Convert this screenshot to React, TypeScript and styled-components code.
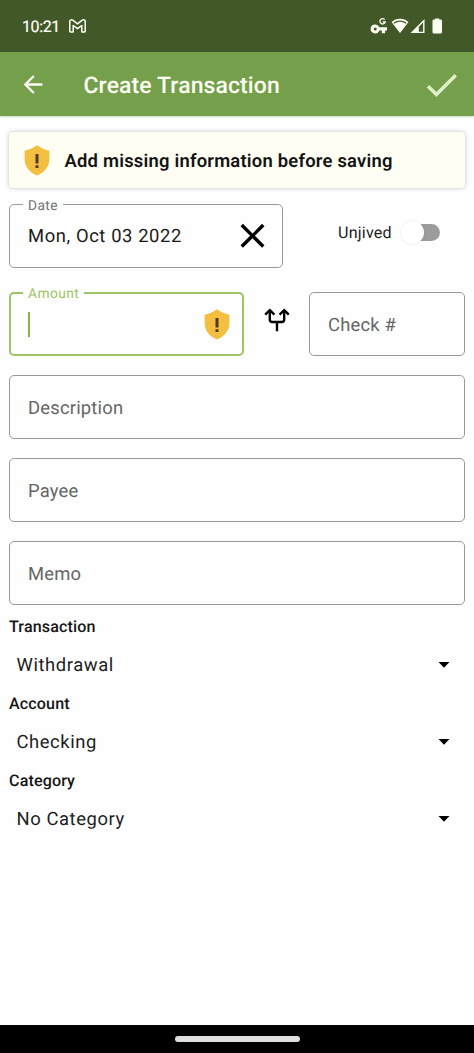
import React from "react";
import styled, { createGlobalStyle } from "styled-components";

const GlobalStyle = createGlobalStyle`
  * { box-sizing: border-box; }
  body { margin: 0; background: #fff; font-family: Roboto, "Liberation Sans", sans-serif; color: #1d1d1d; text-rendering: geometricPrecision; }
  svg { display: block; flex: none; }
`;

const Screen = styled.div`
  display: flex;
  flex-direction: column;
  width: 474px;
  height: 1053px;
  overflow: hidden;
  background: #fefefe;
`;

const StatusBar = styled.div`
  display: flex;
  align-items: center;
  justify-content: space-between;
  flex: none;
  height: 52px;
  padding: 0 32px 0 22px;
  background: #435829;
  color: #fbfff2;
`;

const StatusGroup = styled.div`
  display: flex;
  align-items: center;
`;

const Clock = styled.span`
  width: 47px;
  padding-top: 1px;
  font-size: 16px;
  font-weight: 400;
  line-height: 20px;
  letter-spacing: -0.4px;
  white-space: nowrap;
  -webkit-text-stroke: 0.2px currentColor;
`;

const AppBar = styled.header`
  display: flex;
  align-items: center;
  flex: none;
  height: 64px;
  padding: 2px 12px 0 19px;
  background: #759f4a;
  box-shadow: 0 1px 2px rgba(60, 90, 30, 0.25);
`;

const Title = styled.h1`
  flex: 1;
  margin: 0 0 0 36.5px;
  padding-top: 2px;
  font-size: 23px;
  font-weight: 500;
  line-height: 30px;
  letter-spacing: 0.1px;
  color: #fbfff4;
`;

const Form = styled.main`
  display: flex;
  flex-direction: column;
  flex: 1;
  padding: 16px 9px 0;
`;

const Banner = styled.div`
  display: flex;
  align-items: center;
  gap: 14.5px;
  height: 56px;
  padding: 0 15px 0 15px;
  border-radius: 4px;
  background: #fffef3;
  box-shadow: 0 0 4px rgba(0, 0, 0, 0.25);
`;

const BannerText = styled.strong`
  padding-top: 4px;
  font-size: 18.4px;
  font-weight: 600;
  line-height: 24px;
  letter-spacing: 0.22px;
  white-space: nowrap;
  color: #141414;
`;

const Row = styled.div<{ $top: number }>`
  display: flex;
  width: 456px;
  margin-top: ${(p) => p.$top}px;
`;

const Field = styled.div<{ $width: number; $active?: boolean }>`
  position: relative;
  display: flex;
  align-items: center;
  justify-content: space-between;
  flex: none;
  width: ${(p) => p.$width}px;
  height: 64px;
  padding: 0 ${(p) => (p.$active ? 12 : 9)}px 0 ${(p) => (p.$active ? 16 : 18)}px;
  border: ${(p) => (p.$active ? "2.5px solid #9dc565" : "1.3px solid #999")};
  border-radius: 5px;
  color: ${(p) => (p.$active ? "#9dc565" : "#747474")};
`;

const FloatingLabel = styled.span<{ $top: number; $left: number }>`
  position: absolute;
  top: ${(p) => p.$top}px;
  left: ${(p) => p.$left}px;
  padding: 0 5px;
  background: #fefefe;
  font-size: 13.8px;
  line-height: 16px;
  letter-spacing: 0.4px;
`;

const FieldText = styled.span<{ $dark?: boolean }>`
  padding-top: ${(p) => (p.$dark ? 2 : 4)}px;
  font-size: 18.4px;
  line-height: 24px;
  letter-spacing: ${(p) => (p.$dark ? 0.6 : 0.2)}px;
  white-space: nowrap;
  color: ${(p) => (p.$dark ? "#1b1b1b" : "#666")};
`;

const Caret = styled.span`
  width: 2px;
  height: 25px;
  margin-left: 0.5px;
  background: #86b545;
`;

const ToggleGroup = styled.div`
  display: flex;
  align-items: center;
  gap: 9px;
  height: 57px;
  margin-left: 55px;
`;

const ToggleLabel = styled.span`
  padding-top: 1px;
  font-size: 16.1px;
  line-height: 20px;
  letter-spacing: 0.2px;
`;

const Track = styled.span`
  position: relative;
  width: 39px;
  height: 17px;
  border-radius: 9px;
  background: linear-gradient(90deg, transparent 14px, #9c9c9c 14px);
`;

const Thumb = styled.span`
  position: absolute;
  top: -3px;
  left: 0;
  width: 23px;
  height: 23px;
  border-radius: 50%;
  background: #fff;
  box-shadow: 0 0 2px rgba(0, 0, 0, 0.14);
`;

const SplitButton = styled.div`
  display: flex;
  justify-content: center;
  width: 65px;
  padding-top: 16px;
`;

const Selects = styled.div`
  flex: 1;
`;

const Section = styled.section`
  height: 77.2px;
`;

const SectionLabel = styled.div`
  height: 20px;
  font-size: 16.1px;
  font-weight: 500;
  line-height: 22px;
  letter-spacing: 0.12px;
  color: #161616;
`;

const Select = styled.div`
  display: flex;
  align-items: center;
  justify-content: space-between;
  height: 57px;
  padding: 0 15px 0 7.5px;
`;

const SelectValue = styled.span`
  padding-top: 2px;
  font-size: 18.4px;
  letter-spacing: 0.58px;
`;

const NavBar = styled.footer`
  display: flex;
  justify-content: center;
  flex: none;
  height: 28px;
  padding-top: 11px;
  background: #000;
`;

const Pill = styled.span`
  width: 125px;
  height: 5.5px;
  border-radius: 3px;
  background: #dedede;
`;

const Shield = () => (
  <svg width="26" height="31" viewBox="0 0 26 31">
    <path d="M13 .3C9.500 3 5 4.800.6 5.700v8.500C.6 21.500 5.500 27.500 13 30.600 20.500 27.500 25.400 21.500 25.400 14.200V5.700C21 4.800 16.500 3 13 .3z" fill="#f4bf40" />
    <path d="M11.500 9h3v9.400h-3zM11.500 20.300h3v2.600h-3z" fill="#4c3a20" />
  </svg>
);

const MailIcon = () => (
  <svg width="17" height="14" viewBox="0 0 17 14" fill="none" stroke="#fbfff2" strokeWidth="1.500" strokeLinejoin="round">
    <path d="M.8 2.500C.8.900 2.500.300 3.700 1.200L8.500 4.800 13.300 1.200C14.500.300 16.200.900 16.200 2.500V12.300Q16.200 13 15.500 13H12.800V6.500L8.500 9.700 4.200 6.500V13H1.500Q.8 13 .8 12.300z" />
  </svg>
);

const StatusIcons = () => (
  <svg width="72" height="18" viewBox="370 17 72 18" fill="#fbfff2">
    <path fillRule="evenodd" d="M375.200 24.400a4.500 4.500 0 1 0 4.200 6h2.400v2.900h3.300v-2.900h1.900v-3.200h-7.600a4.500 4.500 0 0 0-4.200-2.800zm0 3a1.500 1.500 0 1 1 0 3 1.500 1.500 0 0 1 0-3z" />
    <path d="M384.700 19.600A2.700 2.700 0 1 0 385.200 22h-2.500" fill="none" stroke="#fbfff2" strokeWidth="1.300" />
    <path d="M400 18.800c3.300 0 6.300 1.200 8.500 3.300L400 33l-8.500-10.900c2.200-2.100 5.200-3.300 8.500-3.300z" />
    <path d="M393.700 23.300c3.800-2.700 8.800-2.700 12.600 0" fill="none" stroke="#435829" strokeWidth="1.300" />
    <path fillRule="evenodd" d="M424.500 19v14h-14zM423.100 22.500l-4.300 4.300v4.900h4.300z" />
    <path d="M435 19.600V18.400h4.200v1.200h1.400q1.400 0 1.400 1.400v11.200q0 1.400-1.400 1.400h-6.700q-1.400 0-1.400-1.400V21q0-1.400 1.400-1.400z" />
  </svg>
);

const BackIcon = () => (
  <svg width="28" height="28" viewBox="0 .4 24 24" fill="#fbfff4">
    <path d="M20 11H7.830l5.590-5.590L12 4l-8 8 8 8 1.410-1.410L7.830 13H20z" />
  </svg>
);

const CheckIcon = () => (
  <svg width="41" height="41" viewBox="0 .3 24 24" fill="#dff0cb">
    <path d="M9 16.170L4.830 12l-1.420 1.410L9 19 21 7l-1.410-1.410z" />
  </svg>
);

const CloseIcon = () => (
  <svg width="41" height="41" viewBox="0 .4 24 24" fill="#000">
    <path d="M19 6.410L17.590 5 12 10.590 6.410 5 5 6.410 10.590 12 5 17.590 6.410 19 12 13.410 17.590 19 19 17.590 13.410 12z" />
  </svg>
);

const SplitIcon = () => (
  <svg width="26" height="24" viewBox="0 0 26 24" fill="none" stroke="#000" strokeWidth="2.400">
    <path d="M13 23.200V14M5.800 2.500V11.500Q5.800 14 8.300 14H17.700Q20.200 14 20.200 11.500V2.500" />
    <path d="M1.200 6.700L5.800 2.200 10.400 6.700M15.600 6.700L20.200 2.200 24.800 6.700" />
  </svg>
);

const DropIcon = () => (
  <svg width="12" height="6" viewBox="0 0 12 6">
    <path d="M.5 0h11L6 5.700z" fill="#000" />
  </svg>
);

const textFields = ["Description", "Payee", "Memo"];
const selects = [
  { label: "Transaction", value: "Withdrawal" },
  { label: "Account", value: "Checking" },
  { label: "Category", value: "No Category" },
];

export default function App() {
  return (
    <>
      <GlobalStyle />
      <Screen>
        <StatusBar>
          <StatusGroup>
            <Clock>10:21</Clock>
            <MailIcon />
          </StatusGroup>
          <StatusIcons />
        </StatusBar>
        <AppBar>
          <BackIcon />
          <Title>Create Transaction</Title>
          <CheckIcon />
        </AppBar>
        <Form>
          <Banner>
            <Shield />
            <BannerText>Add missing information before saving</BannerText>
          </Banner>
          <Row $top={16}>
            <Field $width={274}>
              <FloatingLabel $top={-7.500} $left={13}>Date</FloatingLabel>
              <FieldText $dark>Mon, Oct 03 2022</FieldText>
              <CloseIcon />
            </Field>
            <ToggleGroup>
              <ToggleLabel>Unjived</ToggleLabel>
              <Track>
                <Thumb />
              </Track>
            </ToggleGroup>
          </Row>
          <Row $top={24}>
            <Field $width={235} $active>
              <FloatingLabel $top={-8.500} $left={12}>Amount</FloatingLabel>
              <Caret />
              <Shield />
            </Field>
            <SplitButton>
              <SplitIcon />
            </SplitButton>
            <Field $width={156}>
              <FieldText>Check #</FieldText>
            </Field>
          </Row>
          {textFields.map((name) => (
            <Row $top={19} key={name}>
              <Field $width={456}>
                <FieldText>{name}</FieldText>
              </Field>
            </Row>
          ))}
          <Row $top={11}>
            <Selects>
              {selects.map(({ label, value }) => (
                <Section key={label}>
                  <SectionLabel>{label}</SectionLabel>
                  <Select>
                    <SelectValue>{value}</SelectValue>
                    <DropIcon />
                  </Select>
                </Section>
              ))}
            </Selects>
          </Row>
        </Form>
        <NavBar>
          <Pill />
        </NavBar>
      </Screen>
    </>
  );
}
